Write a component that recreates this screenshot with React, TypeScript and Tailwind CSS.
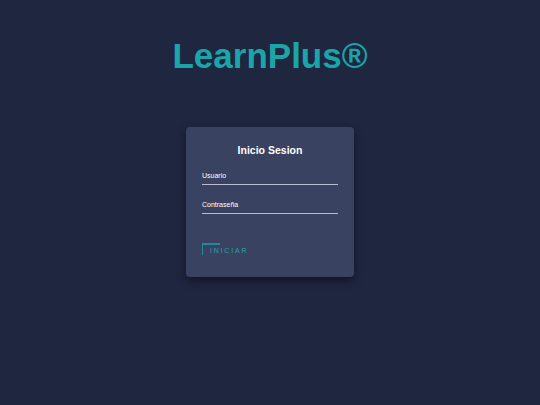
export default function App() {
  return (
    <div className="w-[540px] h-[405px] bg-[#1f2640] flex flex-col items-center" style={{ fontFamily: '"Liberation Sans", Arial, sans-serif' }}>
      <h1 className="mt-[33px] text-[35px] leading-[45px] font-bold text-[#1ba5a9]">LearnPlus®</h1>
      <div className="mt-[49px] w-[168px] h-[150px] bg-[#3a4262] rounded-[4px] shadow-[0_4px_10px_rgba(0,0,0,0.45)] flex flex-col px-[16px]">
        <div className="mt-[16px] text-center text-white font-bold text-[10.5px] leading-[14px]">Inicio Sesion</div>
        <div className="mt-[14px] text-white text-[7px] leading-[9px] pb-[4px] border-b border-[#b9bdd0]">Usuario</div>
        <div className="mt-[15px] text-white text-[7px] leading-[9px] pb-[4px] border-b border-[#b9bdd0]">Contraseña</div>
        <div className="mt-[29px] relative w-[60px] h-[12px]">
          <div className="absolute left-0 top-0 w-[18px] h-[2px] bg-[#1f8a9a]" />
          <div className="absolute left-0 top-0 w-[1px] h-[12px] bg-[#1f8a9a]" />
          <div className="absolute left-[8px] top-[4px] text-[#1ba5a9] text-[7px] leading-[8px] tracking-[1.8px]">INICIAR</div>
        </div>
      </div>
    </div>
  );
}
